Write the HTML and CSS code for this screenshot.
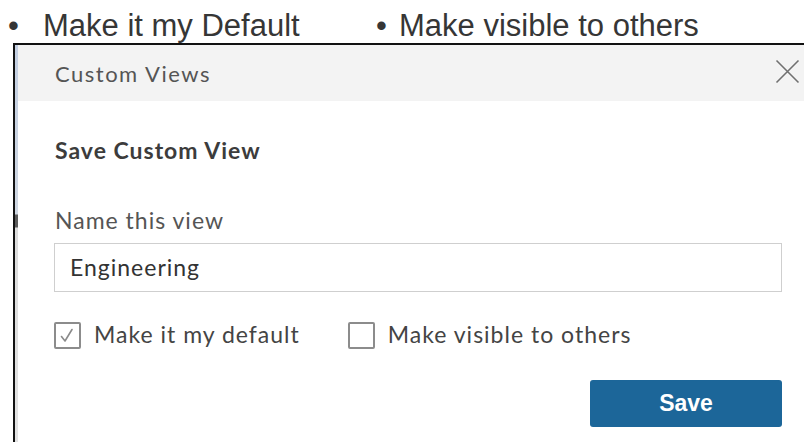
FILE: index.html
```html
<!DOCTYPE html>
<html lang="en">
<head>
<meta charset="utf-8">
<title>Custom Views</title>
<link rel="stylesheet" href="styles.css">
</head>
<body>
<div class="slide">
  <ul class="points">
    <li class="point point-first"><span class="dot">•</span>Make it my Default</li>
    <li class="point point-second"><span class="dot">•</span>Make visible to others</li>
  </ul>

  <section class="dialog">
    <div class="edge"></div>
    <div class="panel">
      <header class="panel-head">
        <span class="panel-title">Custom Views</span>
        <button class="close" type="button" aria-label="Close">
          <svg width="25" height="25" viewBox="0 0 25 25">
            <path d="M1.5 1.5 L23.5 23.5 M23.5 1.5 L1.5 23.5" stroke="#707070" stroke-width="1.6" fill="none"/>
          </svg>
        </button>
      </header>

      <div class="panel-body">
        <h2 class="section-title">Save Custom View</h2>
        <label class="field-label" for="viewName">Name this view</label>
        <div class="field" id="viewName">Engineering</div>

        <div class="options">
          <div class="option">
            <span class="box">
              <svg width="23" height="23" viewBox="0 0 23 23">
                <path d="M5.5 12.5 L9 17 L16 5.5" stroke="#8a8a8a" stroke-width="1.6" fill="none" stroke-linecap="round" stroke-linejoin="round"/>
              </svg>
            </span>
            <span class="option-label">Make it my default</span>
          </div>
          <div class="option">
            <span class="box"></span>
            <span class="option-label">Make visible to others</span>
          </div>
        </div>

        <div class="actions">
          <button class="save" type="button">Save</button>
        </div>
      </div>
    </div>
  </section>
</div>
</body>
</html>
```

FILE: styles.css
```css
html, body {
  margin: 0;
  padding: 0;
  background: #ffffff;
}

.slide {
  width: 804px;
  height: 442px;
  overflow: hidden;
  display: flex;
  flex-direction: column;
}

/* bullet list above the dialog */
.points {
  list-style: none;
  margin: 0;
  padding: 8px 0 0 0;
  height: 35px;
  display: flex;
  font-family: "Liberation Sans", Arial, sans-serif;
  font-size: 31px;
  line-height: 36px;
  color: #363636;
  white-space: nowrap;
}

.point {
  display: flex;
}

.point-first {
  padding-left: 8px;
  width: 368px;
}

.point-first .dot {
  width: 35px;
}

.point-second .dot {
  width: 23px;
}

.dot {
  display: inline-block;
}

/* dialog frame */
.dialog {
  flex: 1;
  margin-left: 13px;
  border-top: 2px solid #111;
  border-left: 2px solid #111;
  display: flex;
  font-family: Lato, "Open Sans", sans-serif;
  letter-spacing: 1px;
}

.edge {
  width: 3px;
  flex: none;
  background: linear-gradient(#c3cfe2 0px, #cfd7e2 169px, #5a5a5a 170px, #5a5a5a 182px, #dcdcdc 183px, #e2e2e2 100%);
}

.panel {
  flex: 1;
  display: flex;
  flex-direction: column;
}

.panel-head {
  height: 56px;
  background: #f3f3f3;
  display: flex;
  align-items: center;
  justify-content: space-between;
  padding: 0 4px 0 37px;
}

.panel-title {
  font-size: 22px;
  line-height: 26px;
  letter-spacing: 1.5px;
  color: #555555;
  margin-top: 1px;
}

.close {
  border: 0;
  background: none;
  padding: 0;
  width: 25px;
  height: 25px;
  margin-top: -4px;
  display: block;
}

.close svg {
  display: block;
}

.panel-body {
  padding: 0 22px 0 36px;
  display: flex;
  flex-direction: column;
}

.section-title {
  margin: 35px 0 0 1px;
  font-size: 23px;
  line-height: 28px;
  font-weight: 700;
  color: #3c3c3c;
}

.field-label {
  margin: 42px 0 0 1px;
  font-size: 23px;
  line-height: 28px;
  color: #555555;
}

.field {
  margin-top: 9px;
  height: 46px;
  border: 1px solid #cfcfcf;
  padding: 0 15px 1px;
  box-sizing: content-box;
  display: flex;
  align-items: center;
  font-size: 23px;
  line-height: 28px;
  color: #333333;
}

.options {
  margin-top: 30px;
  display: flex;
}

.option {
  display: flex;
  align-items: center;
  gap: 13px;
  height: 27px;
}

.option + .option {
  margin-left: 48px;
}

.box {
  width: 23px;
  height: 23px;
  border: 2px solid #8c8c8c;
  border-radius: 2px;
  display: block;
  flex: none;
}

.box svg {
  display: block;
}

.option-label {
  font-size: 23px;
  line-height: 27px;
  margin-top: -2px;
  color: #444444;
}

.actions {
  margin-top: 31px;
  display: flex;
  justify-content: flex-end;
}

.save {
  width: 192px;
  height: 47px;
  border: 0;
  border-radius: 3px;
  background: #1c6699;
  color: #ffffff;
  font-family: "Liberation Sans", Arial, sans-serif;
  font-weight: 700;
  font-size: 23px;
  letter-spacing: 0;
  padding: 0;
}
```
